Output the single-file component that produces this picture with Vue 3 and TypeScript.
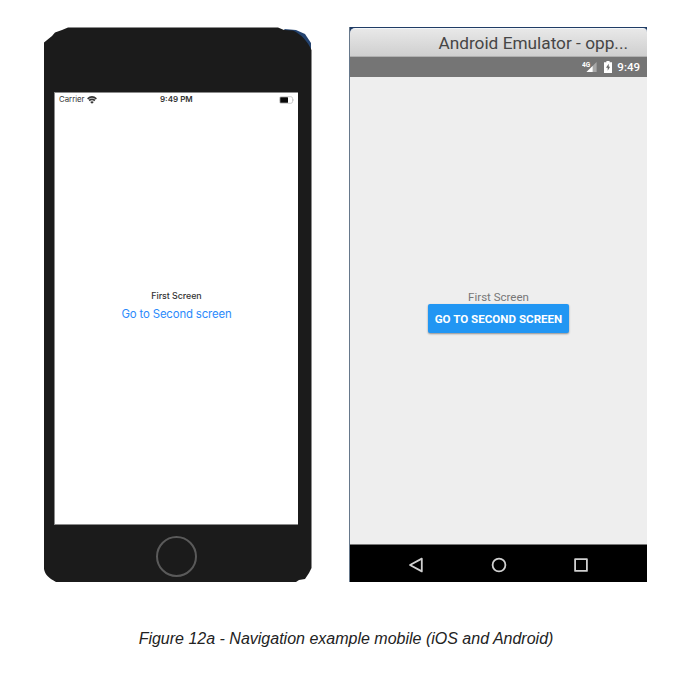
<script setup lang="ts">
const carrier: string = 'Carrier'
const iosTime: string = '9:49 PM'
const androidTime: string = '9:49'
const label: string = 'First Screen'
</script>

<template>
  <figure class="figure">
    <div class="devices">
      <section class="iphone">
        <svg class="body" width="268" height="555" viewBox="0 0 268 555" aria-hidden="true">
          <path class="edge" d="M240 2L252 3L261 7L267 16V22L255 24Z" />
          <path
            class="shell"
            d="M0 15.5L8 9L11 5.5L18 3L24 .5H234L240 3L249 3.5C257 7 264 15 267.5 23V541L265 546L261 552L255 553L252 555H12C5 551 1 548 0 542Z"
          />
        </svg>
        <div class="ios-screen">
          <header class="ios-status">
            <span class="carrier">{{ carrier }}</span>
            <svg class="wifi" width="10" height="8" viewBox="0 0 10 8">
              <path d="M.6 2.8Q5 -.9 9.4 2.8M2.1 4.5Q5 2.2 7.9 4.5" />
              <path class="dot" d="M3.2 5.9Q5 4.6 6.8 5.9L5 7.8Z" />
            </svg>
            <span class="ios-time">{{ iosTime }}</span>
            <svg class="battery" width="16" height="8" viewBox="0 0 16 8">
              <rect class="case" x=".5" y=".7" width="13" height="6.6" rx="1.6" />
              <path class="tip" d="M14.4 2.6Q15.6 4 14.4 5.4Z" />
              <rect class="charge" x="1.2" y="1.3" width="7.8" height="5.4" rx=".5" />
            </svg>
          </header>
          <main class="ios-content">
            <span class="ios-label">{{ label }}</span>
            <a class="ios-link">Go to Second screen</a>
          </main>
        </div>
        <div class="home"></div>
      </section>

      <section class="emulator">
        <header class="titlebar"><span>Android Emulator - opp...</span></header>
        <div class="android-status">
          <svg class="signal" width="16" height="12" viewBox="0 0 16 12">
            <path class="faint" d="M14.6 1V11H4.5Z" />
            <path class="strong" d="M10.6 5V11H4.5Z" />
            <text x="0" y="5.6">4G</text>
          </svg>
          <svg class="power" width="8" height="12" viewBox="0 0 8 12">
            <path class="strong" d="M2.4 0H5.6V1.2H8V12H0V1.2H2.4Z" />
            <path class="bolt" d="M4.7 2.8L2 6.8H3.7V9.7L6.1 5.8H4.7Z" />
          </svg>
          <span class="android-time">{{ androidTime }}</span>
        </div>
        <main class="android-content">
          <span class="android-label">{{ label }}</span>
          <button class="android-button" type="button"><span>GO TO SECOND SCREEN</span></button>
        </main>
        <nav class="navbar">
          <svg width="16" height="16" viewBox="0 0 16 16"><path d="M13.8 1.6V14.4L2 8Z" /></svg>
          <svg width="16" height="16" viewBox="0 0 16 16"><circle cx="8" cy="8" r="6.4" /></svg>
          <svg width="16" height="16" viewBox="0 0 16 16"><rect x="2.1" y="2.1" width="11.8" height="11.8" /></svg>
        </nav>
      </section>
    </div>
    <figcaption class="caption">Figure 12a - Navigation example mobile (iOS and Android)</figcaption>
  </figure>
</template>

<style>
body {
  background: #fff;
}
</style>

<style scoped>
.figure {
  box-sizing: border-box;
  width: 690px;
  height: 678px;
  margin: 0;
  padding: 27px 43px 0 44px;
  overflow: hidden;
}
.devices {
  display: flex;
  justify-content: space-between;
  height: 555px;
}
.iphone {
  position: relative;
  display: flex;
  flex-direction: column;
  box-sizing: border-box;
  width: 268px;
  height: 555px;
  padding: 65px 14px 0 10px;
}
.body {
  position: absolute;
  inset: 0;
}
.edge {
  fill: #24436f;
}
.shell {
  fill: #1b1b1b;
}
.ios-screen {
  position: relative;
  display: flex;
  flex-direction: column;
  box-sizing: border-box;
  height: 433px;
  border: 1px solid #8b8b8b;
  border-right-width: 0;
  border-top-color: #8b8b8b;
  background: #fff;
  font-family: Inter, sans-serif;
}
.ios-status {
  display: grid;
  grid-template-columns: 28px 73px 1fr 19px;
  align-items: center;
  height: 13px;
  padding-left: 4px;
  color: #333;
  font-size: 7.8px;
  line-height: 13px;
  white-space: nowrap;
}
.wifi {
  fill: none;
  stroke: #333;
  stroke-width: 1.6;
}
.wifi .dot {
  fill: #333;
  stroke: none;
}
.ios-time {
  font-weight: 600;
  font-size: 8px;
}
.case {
  fill: none;
  stroke: #b8b8b8;
  stroke-width: 0.7;
}
.tip {
  fill: #b8b8b8;
}
.charge {
  fill: #080808;
}
.ios-content {
  display: flex;
  flex-direction: column;
  align-items: center;
  padding-top: 183px;
  white-space: nowrap;
}
.ios-label {
  color: #333;
  font-size: 8.9px;
  font-weight: 500;
  letter-spacing: -0.05px;
  line-height: 14px;
}
.ios-link {
  margin-top: 2px;
  color: #2b8afb;
  font-size: 11.4px;
  letter-spacing: -0.16px;
  line-height: 18px;
}
.home {
  position: relative;
  box-sizing: border-box;
  width: 41px;
  height: 41px;
  margin: 11px 0 0 102px;
  border: 2px solid #5a5a5a;
  border-radius: 50%;
}
.emulator {
  display: flex;
  flex-direction: column;
  box-sizing: border-box;
  width: 298px;
  height: 555px;
  border-left: 1px solid #66788b;
  background: #203c65;
  font-family: Roboto, sans-serif;
}
.titlebar {
  display: flex;
  justify-content: flex-end;
  box-sizing: border-box;
  height: 29px;
  margin-top: 1px;
  padding-right: 19px;
  border-top: 1px solid #f2f5f8;
  border-bottom: 1px solid #b0b0b0;
  border-radius: 5px 4px 0 0;
  background: linear-gradient(#e8e8e8, #cfcfcf);
  color: #464646;
  font-size: 17.25px;
  line-height: 29px;
  white-space: nowrap;
}
.android-status {
  display: flex;
  align-items: center;
  box-sizing: border-box;
  height: 20px;
  padding: 0 7px 0 232px;
  background: #757575;
  color: #fff;
}
.strong,
.signal text {
  fill: #fff;
}
.faint {
  fill: #a8a8a8;
}
.signal text {
  font-size: 6.5px;
  font-weight: 700;
}
.power {
  margin-left: 6px;
}
.bolt {
  fill: #666;
}
.android-time {
  margin-left: auto;
  font-size: 11.5px;
  font-weight: 500;
  line-height: 18px;
}
.android-content {
  display: flex;
  flex-direction: column;
  align-items: center;
  box-sizing: border-box;
  height: 467px;
  padding-top: 213px;
  background: #eee;
}
.android-label {
  color: #777;
  font-size: 11.5px;
  line-height: 14px;
}
.android-button {
  width: 141px;
  height: 29px;
  padding: 0;
  border: 0;
  border-radius: 2px;
  background: #2196f3;
  box-shadow: 0 1px 2px rgba(0, 0, 0, 0.4);
  color: #fff;
  font: 700 11.6px/30px Roboto, sans-serif;
  white-space: nowrap;
}
.navbar {
  display: flex;
  flex: 1;
  align-items: center;
  justify-content: space-between;
  box-sizing: border-box;
  padding: 2px 58px 0;
  border-top: 1px solid #777;
  background: #000;
}
.navbar svg {
  fill: none;
  stroke: #d0d0d0;
  stroke-width: 1.8;
  stroke-linejoin: round;
}
.caption {
  margin-top: 47px;
  padding-left: 1px;
  color: #222;
  font: italic 16px/20px 'Liberation Sans', sans-serif;
  text-align: center;
}
</style>
